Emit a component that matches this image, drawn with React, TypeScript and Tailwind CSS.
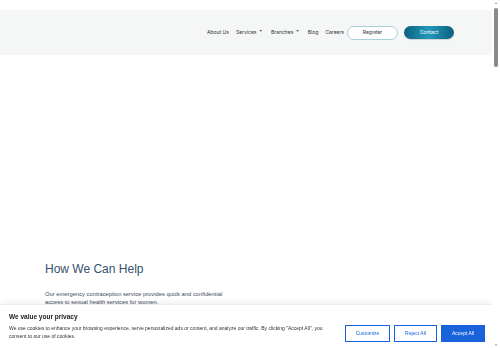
import React from "react";

const navItems: { label: string; caret?: boolean }[] = [
  { label: "About Us" },
  { label: "Services", caret: true },
  { label: "Branches", caret: true },
  { label: "Blog" },
  { label: "Careers" },
];

function Caret() {
  return <span className="ml-[3px] mr-[2px] text-[2.5px] leading-none text-[#555]">▼</span>;
}

export default function App() {
  return (
    <div className="min-h-[2000px] w-[492px] bg-white font-['Liberation_Sans',Arial,sans-serif]">
      {/* header */}
      <div className="pt-[10px]">
        <header className="h-[45px] bg-[#f5f7f7] flex items-center justify-end pr-[38px]">
          <nav className="flex items-center text-[5px] text-[#333] font-['Inter',sans-serif]">
            {navItems.map((n, i) => (
              <span
                key={n.label}
                className={`flex items-center ${i === navItems.length - 1 ? "mr-[3px]" : "mr-[7px]"}`}
              >
                {n.label}
                {n.caret && <Caret />}
              </span>
            ))}
          </nav>
          <button className="w-[51px] h-[14px] rounded-full border border-[#a9cfdb] bg-white text-[5px] text-[#333] font-['Inter',sans-serif]">
            Register
          </button>
          <button className="ml-[6px] w-[50px] h-[13px] rounded-full bg-gradient-to-r from-[#0d607f] via-[#2099ba] to-[#0d607f] text-[5px] text-white font-['Inter',sans-serif] shadow-[0_1px_1px_rgba(0,0,0,0.15)]">
            Contact
          </button>
        </header>
      </div>

      {/* hero area */}
      <section className="pt-[207px] pl-[45px]">
        <h2 className="text-[12px] leading-[14px] text-[#34506e]">How We Can Help</h2>
        <p className="mt-[14px] w-[190px] text-[5.8px] leading-[8px] text-[#3c4b5e]">
          Our emergency contraception service provides quick and confidential access to sexual health services for women.
        </p>
      </section>

      {/* cookie banner */}
      <div className="fixed bottom-0 left-0 right-[8px] h-[44px] bg-white border-t border-[#eee] shadow-[0_-2px_6px_rgba(0,0,0,0.06)] pl-[9px] pr-[7px] pt-[8px]">
        <div className="text-[6.5px] leading-[8px] font-bold text-[#212121]">We value your privacy</div>
        <div className="flex items-start mt-[3px]">
          <p className="w-[325px] text-[5px] leading-[8px] text-[#333]">
            We use cookies to enhance your browsing experience, serve personalized ads or content, and analyze our traffic. By clicking "Accept All", you consent to our use of cookies.
          </p>
          <div className="ml-auto flex gap-[4px] mt-[1px]">
            <button className="w-[45px] h-[17px] border border-[#1863dc] text-[#1863dc] text-[5px] bg-white">Customize</button>
            <button className="w-[43px] h-[17px] border border-[#1863dc] text-[#1863dc] text-[5px] bg-white">Reject All</button>
            <button className="w-[44px] h-[17px] border border-[#1863dc] bg-[#1863dc] text-white text-[5px]">Accept All</button>
          </div>
        </div>
      </div>

      {/* window scrollbar */}
      <div className="fixed top-0 right-0 bottom-0 w-[8px] bg-white flex flex-col items-center">
        <span className="mt-[1px] text-[3px] leading-[4px] text-[#777]">▲</span>
        <div className="mt-[3px] w-[4px] h-[59px] rounded-full bg-[#8a8a8a]" />
        <span className="mt-auto mb-[1px] text-[3px] leading-[4px] text-[#777]">▼</span>
      </div>
    </div>
  );
}
